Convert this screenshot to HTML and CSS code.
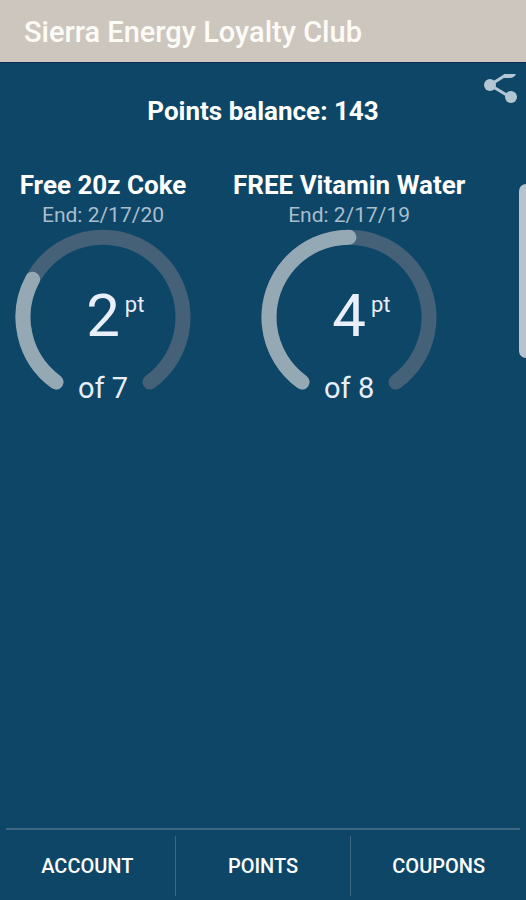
FILE: index.html
```html
<!DOCTYPE html>
<html lang="en">
  <head>
    <meta charset="UTF-8" />
    <meta name="viewport" content="width=device-width, initial-scale=1.0" />
    <title>Sierra Energy Loyalty Club</title>
    <link rel="stylesheet" href="styles.css">
  </head>
  <body>
    <header class="app-bar">
      <h1>Sierra Energy Loyalty Club</h1>
    </header>

    <main class="content">
      <button class="share" type="button" aria-label="Share">
        <svg width="34" height="30" viewBox="0 0 34 30">
          <path d="M26 -1 L7 11 L27 23" fill="none" stroke="#b4c6d3" stroke-width="3" />
          <path d="M21 0 H33 Q31 4 27 4 H20 Z" fill="#b4c6d3" />
          <circle cx="7" cy="11" r="6" fill="#b4c6d3" />
          <circle cx="28" cy="23" r="6" fill="#b4c6d3" />
        </svg>
      </button>

      <p class="balance">Points balance: 143</p>

      <!-- Rewards -->
      <section class="rewards">
        <article class="reward">
          <h2>Free 20z Coke</h2>
          <p class="end-date">End: 2/17/20</p>
          <div class="gauge">
            <svg class="ring" viewBox="0 0 176 162">
              <path class="track" pathLength="7" d="M41 153 A80 80 0 1 1 135 153" />
              <path class="progress" pathLength="7" stroke-dasharray="2 10" d="M41 153 A80 80 0 1 1 135 153" />
            </svg>
            <p class="points"><span class="value">2</span><span class="unit">pt</span></p>
            <p class="goal">of 7</p>
          </div>
        </article>

        <article class="reward">
          <h2>FREE Vitamin Water</h2>
          <p class="end-date">End: 2/17/19</p>
          <div class="gauge">
            <svg class="ring" viewBox="0 0 176 162">
              <path class="track" pathLength="8" d="M41 153 A80 80 0 1 1 135 153" />
              <path class="progress" pathLength="8" stroke-dasharray="4 10" d="M41 153 A80 80 0 1 1 135 153" />
            </svg>
            <p class="points"><span class="value">4</span><span class="unit">pt</span></p>
            <p class="goal">of 8</p>
          </div>
        </article>
      </section>

      <div class="edge-handle"></div>
    </main>

    <!-- Bottom tabs -->
    <nav class="tabs">
      <button type="button">ACCOUNT</button>
      <button type="button">POINTS</button>
      <button type="button">COUPONS</button>
    </nav>
  </body>
</html>
```

FILE: styles.css
```css
* {
  box-sizing: border-box;
}

body {
  margin: 0;
  min-height: 100vh;
  display: flex;
  flex-direction: column;
  background: #0e4668;
  color: #fff;
  font-family: Roboto, Arial, sans-serif;
}

h1, h2, p {
  margin: 0;
}

button {
  padding: 0;
  border: 0;
  background: none;
  color: inherit;
  font-family: inherit;
  cursor: pointer;
}

/* Top bar */
.app-bar {
  padding: 16px 24px 14px;
  background: #cdc6bf;
  border-bottom: 1px solid #0b2a55;
}

.app-bar h1 {
  color: #fdfbf6;
  font-size: 29px;
  font-weight: 500;
  line-height: 32px;
}

.content {
  position: relative;
  flex: 1;
  padding-top: 32px;
}

.share {
  position: absolute;
  top: 11px;
  right: 9px;
}

.share svg {
  display: block;
}

.balance {
  text-align: center;
  font-size: 26px;
  font-weight: 700;
  line-height: 32px;
}

/* Rewards */
.rewards {
  display: flex;
  gap: 42px;
  padding: 42px 15px 0;
}

.reward {
  display: flex;
  flex-direction: column;
  align-items: center;
}

.reward h2 {
  font-size: 26px;
  font-weight: 700;
  line-height: 32px;
  white-space: nowrap;
}

.end-date {
  color: #a9bdcc;
  font-size: 21px;
  line-height: 28px;
}

.gauge {
  position: relative;
  width: 176px;
}

.ring {
  display: block;
  width: 100%;
}

.ring path {
  fill: none;
  stroke-width: 15;
  stroke-linecap: round;
}

.track {
  stroke: #446177;
}

.progress {
  stroke: #94a9b4;
}

.points {
  position: absolute;
  top: 52px;
  left: 0;
  right: 0;
  display: grid;
  grid-template-columns: 1fr auto 1fr;
  column-gap: 5px;
  color: #e8eefa;
}

.value {
  grid-column: 2;
  font-size: 60px;
  line-height: 70px;
}

.unit {
  font-size: 22px;
  line-height: 48px;
}

.goal {
  position: absolute;
  bottom: -13px;
  left: 0;
  right: 0;
  text-align: center;
  color: #e8eefa;
  font-size: 29px;
  line-height: 32px;
}

/* Handle of the side panel */
.edge-handle {
  position: absolute;
  top: 121px;
  right: 0;
  width: 7px;
  height: 174px;
  border-radius: 7px 0 0 7px;
  background: #b7c3cf;
}

/* Bottom tabs */
.tabs {
  display: flex;
  padding-bottom: 4px;
}

.tabs::before {
  content: "";
  position: absolute;
  left: 6px;
  right: 6px;
  height: 2px;
  background: #3f6781;
}

.tabs button {
  flex: 1;
  height: 60px;
  margin-top: 8px;
  font-size: 20px;
  font-weight: 500;
}

.tabs button + button {
  border-left: 1px solid #3f6781;
}
```
